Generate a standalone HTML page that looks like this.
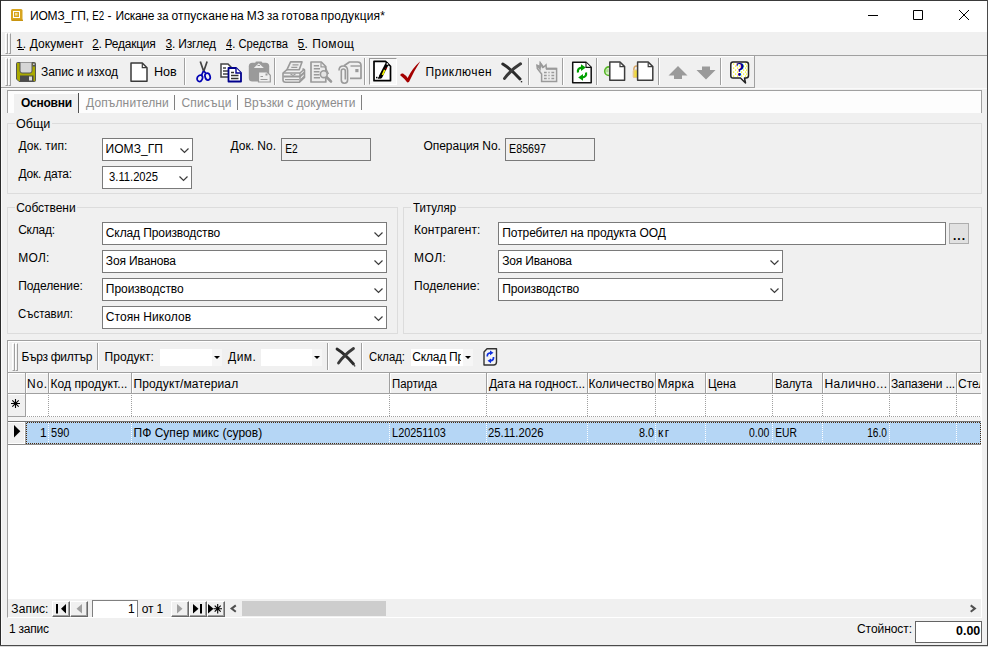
<!DOCTYPE html>
<html><head><meta charset="utf-8"><title>ИОМЗ_ГП</title>
<style>
html,body{margin:0;padding:0;}
body{width:988px;height:647px;overflow:hidden;background:#f0f0f0;position:relative;font-family:'Liberation Sans',sans-serif;font-size:12px;color:#000;}
.t{position:absolute;white-space:pre;line-height:normal;}
svg{position:absolute;overflow:visible;}
</style></head><body>
<div style="position:absolute;left:0px;top:0px;width:988px;height:647px;box-sizing:border-box;background:#f0f0f0;"></div>
<div style="position:absolute;left:1px;top:1px;width:986px;height:31px;box-sizing:border-box;background:#fff;"></div>
<svg style="left:11px;top:9px" width="12" height="12" viewBox="0 0 12 12"><rect x="0" y="0" width="11.5" height="11.5" rx="1.5" fill="#d8a520"/><rect x="0.5" y="10.5" width="11.5" height="1.5" fill="#c89410"/><rect x="2.5" y="2.5" width="6" height="6" fill="none" stroke="#fff" stroke-width="1"/><rect x="4" y="4" width="2.5" height="2.5" fill="#f3dfa0"/></svg>
<svg style="left:868px;top:10px" width="110" height="12" viewBox="0 0 110 12"><path d="M0 5.5H10 M45.5 0.5H54.5V9.5H45.5Z M91 0L101 10 M101 0L91 10" fill="none" stroke="#000" stroke-width="1"/></svg>
<div style="position:absolute;left:1px;top:32px;width:1px;height:613px;box-sizing:border-box;background:#fafafa;"></div>
<div style="position:absolute;left:5px;top:33px;width:3px;height:21px;box-sizing:border-box;border-left:1px solid #fff;border-top:1px solid #fff;border-right:1px solid #a0a0a0;border-bottom:1px solid #a0a0a0;"></div>
<div style="position:absolute;left:8px;top:33px;width:3px;height:21px;box-sizing:border-box;border-left:1px solid #fff;border-top:1px solid #fff;border-right:1px solid #a0a0a0;border-bottom:1px solid #a0a0a0;"></div>
<div style="position:absolute;left:17.5px;top:49px;width:6px;height:1px;box-sizing:border-box;background:#000;"></div>
<div style="position:absolute;left:93px;top:49px;width:6px;height:1px;box-sizing:border-box;background:#000;"></div>
<div style="position:absolute;left:166px;top:49px;width:6px;height:1px;box-sizing:border-box;background:#000;"></div>
<div style="position:absolute;left:226px;top:49px;width:6px;height:1px;box-sizing:border-box;background:#000;"></div>
<div style="position:absolute;left:298.5px;top:49px;width:6px;height:1px;box-sizing:border-box;background:#000;"></div>
<div style="position:absolute;left:1px;top:55px;width:986px;height:1px;box-sizing:border-box;background:#a0a0a0;"></div>
<div style="position:absolute;left:1px;top:56px;width:754px;height:1px;box-sizing:border-box;background:#fff;"></div>
<div style="position:absolute;left:1px;top:87px;width:754px;height:1px;box-sizing:border-box;background:#a0a0a0;"></div>
<div style="position:absolute;left:754px;top:56px;width:1px;height:32px;box-sizing:border-box;background:#a0a0a0;"></div>
<div style="position:absolute;left:5px;top:58px;width:3px;height:28px;box-sizing:border-box;border-left:1px solid #fff;border-top:1px solid #fff;border-right:1px solid #a0a0a0;border-bottom:1px solid #a0a0a0;"></div>
<div style="position:absolute;left:8px;top:58px;width:3px;height:28px;box-sizing:border-box;border-left:1px solid #fff;border-top:1px solid #fff;border-right:1px solid #a0a0a0;border-bottom:1px solid #a0a0a0;"></div>
<svg style="left:16px;top:62px" width="20" height="20" viewBox="0 0 20 20"><path d="M1.5 0.5H18.5Q19.5 0.5 19.5 1.5V18.5Q19.5 19.5 18.5 19.5H3L0.5 17V1.5Q0.5 0.5 1.5 0.5Z" fill="#a9a900" stroke="#555"/><path d="M4 0.5V9Q4 11 6 11H14Q16 11 16 9V0.5" fill="#d6d6d6" stroke="#555"/><rect x="4" y="13.5" width="13.5" height="6" fill="#4a4a4a"/><rect x="13" y="14.5" width="3" height="4" fill="#ddd"/><rect x="16.5" y="1" width="2.5" height="3.5" fill="#555"/><rect x="17.2" y="1.5" width="1.3" height="1.5" fill="#eee"/></svg>
<svg style="left:130px;top:62px" width="18" height="20" viewBox="0 0 18 20"><path d="M1 1H12.3L17 5.7V19.2H1Z" fill="#fff" stroke="#3a3a3a" stroke-width="1.5" stroke-linejoin="round"/><path d="M12.3 1.3V5.7H16.7" fill="none" stroke="#3a3a3a" stroke-width="1.2"/></svg>
<svg style="left:196px;top:61px" width="16" height="22" viewBox="0 0 16 22"><path d="M4.3 0.5L7.9 11 M11.1 0.5L7.5 11" fill="none" stroke="#444" stroke-width="1.7"/><path d="M7.4 10L5.6 14.2 M7.9 10L9.8 12.3" stroke="#0000b4" stroke-width="1.7" fill="none"/><ellipse cx="3.8" cy="17.3" rx="2.6" ry="3.3" transform="rotate(25 3.8 17.3)" fill="none" stroke="#0000b4" stroke-width="1.7"/><ellipse cx="11.6" cy="15.6" rx="2.5" ry="3.5" transform="rotate(-18 11.6 15.6)" fill="none" stroke="#0000b4" stroke-width="1.7"/></svg>
<svg style="left:220px;top:63px" width="23" height="20" viewBox="0 0 23 20"><path d="M1 1H8L11.5 4.5V14H1Z" fill="#fff" stroke="#444" stroke-width="1.5"/><path d="M3 5H6 M3 8H8 M3 11H8" stroke="#444" stroke-width="1.3"/><path d="M8.5 5H16L21 10V18.5H8.5Z" fill="#fff" stroke="#00008c" stroke-width="1.8" stroke-linejoin="round"/><path d="M16 5V10H21" fill="#fff" stroke="#00008c" stroke-width="1.4"/><path d="M11 9.5H14 M11 12.5H18.5 M11 15.5H18.5" stroke="#333" stroke-width="1.3"/></svg>
<svg style="left:248px;top:62px" width="23" height="21" viewBox="0 0 23 21"><rect x="0.8" y="0.8" width="20.4" height="18.7" rx="3.5" fill="#9a9a9a"/><rect x="7.3" y="-0.4" width="7" height="3" rx="1.4" fill="#9a9a9a"/><path d="M5.8 6L10.8 1.2L15.8 6Z" fill="#eee"/><rect x="9.5" y="3" width="2.5" height="1" fill="#9a9a9a"/><path d="M10.5 10H19L22.3 13.3V20H10.5Z" fill="#eee" stroke="#9a9a9a" stroke-width="1.2"/><path d="M12.5 14.5H15 M12.5 17.5H19.5" stroke="#9a9a9a" stroke-width="1.2"/><rect x="17.5" y="11.5" width="2" height="2" fill="#9a9a9a"/></svg>
<svg style="left:282px;top:61px" width="24" height="22" viewBox="0 0 24 22"><path d="M8.6 0.9H20L17.2 8.7H5Z" fill="#ececec" stroke="#9a9a9a" stroke-width="1.6" stroke-linejoin="round"/><path d="M10.5 3.9H16.5 M9.3 6.3H15.3" stroke="#9a9a9a" stroke-width="1.3"/><path d="M5 8.7L1 12V19Q1 21.2 3.5 21.2H17.5L22.5 16.5V9L20.5 7.7" fill="none" stroke="#9a9a9a" stroke-width="1.6" stroke-linejoin="round"/><path d="M1 12H18L22.5 8 M18 12V21" fill="none" stroke="#9a9a9a" stroke-width="1.4"/><path d="M1.5 15.4H18L22.3 11.6" fill="none" stroke="#9a9a9a" stroke-width="2"/><path d="M3 18.7H17 M18.5 19L22 15.5" stroke="#9a9a9a" stroke-width="1.3"/><path d="M8.5 13L11 14.4L13.5 13" fill="none" stroke="#9a9a9a" stroke-width="1.2"/></svg>
<svg style="left:310px;top:61px" width="24" height="22" viewBox="0 0 24 22"><path d="M1 1H11.3L15.8 5.5V21H1Z" fill="#ececec" stroke="#9a9a9a" stroke-width="1.7" stroke-linejoin="round"/><path d="M11 1.5V5.8H15.5" fill="none" stroke="#9a9a9a" stroke-width="1.2"/><path d="M3.8 4.7H9 M3.8 7.7H10 M3.8 10.7H9.5 M3.8 13.7H9.5 M3.8 16.7H10 " stroke="#9a9a9a" stroke-width="1.4"/><path d="M16 15.5L21 20.5" stroke="#9a9a9a" stroke-width="2.6" stroke-linecap="round"/><path d="M15 6L18.5 13" stroke="#9a9a9a" stroke-width="1.4"/><circle cx="13.8" cy="13.2" r="3.4" fill="#e4e4e4" stroke="#9a9a9a" stroke-width="1.6"/></svg>
<svg style="left:338px;top:61px" width="24" height="23" viewBox="0 0 24 23"><path d="M6 4.7L11.5 1H19.5Q23 1 23 4.5V17.3H12" fill="none" stroke="#9a9a9a" stroke-width="1.7" stroke-linejoin="round"/><path d="M12.5 5H22.5" stroke="#9a9a9a" stroke-width="1.4"/><rect x="17.3" y="8" width="3.2" height="3.2" fill="#9a9a9a"/><path d="M1 9.5Q1 5 5.2 5Q9.6 5 9.6 9.5V19Q9.6 22.2 6.4 22.2Q3.3 22.2 3.3 19V10Q3.3 8 5.3 8Q7.3 8 7.3 10V18.5" fill="none" stroke="#9a9a9a" stroke-width="1.6"/></svg>
<div style="position:absolute;left:369px;top:58px;width:28px;height:27px;box-sizing:border-box;border-top:1px solid #9a9a9a;border-left:1px solid #9a9a9a;border-right:1px solid #fff;border-bottom:1px solid #fff;background:#f8f8f8;"></div>
<svg style="left:373px;top:60px" width="19" height="22" viewBox="0 0 19 22"><path d="M1 1.3H12.5L17.5 6.3V20.7H1Z" fill="#fff" stroke="#000" stroke-width="1.7" stroke-linejoin="round"/><path d="M14 4L7.6 16.6" stroke="#000" stroke-width="3.6" stroke-linecap="round"/><path d="M8 16.5Q7 18.3 5 18" stroke="#000" stroke-width="1.6" fill="none"/><path d="M11.7 9.8L9.5 15" stroke="#f4f400" stroke-width="1.7"/><path d="M13.7 8.2L12.6 8.8" stroke="#c00000" stroke-width="1.8"/><rect x="13.6" y="3.2" width="1.6" height="1.6" fill="#eee"/><rect x="15" y="6.3" width="1.5" height="1.5" fill="#eee"/><rect x="3" y="16.8" width="1.5" height="1.5" fill="#000"/></svg>
<svg style="left:399px;top:61px" width="22" height="22" viewBox="0 0 22 22"><path d="M1.2 14.2Q1.5 12 4 12.6Q7 14.5 8.6 17Q13.5 7 21.3 0.3Q15 10 10 21L8.3 21.6Q5.5 17.5 1.2 14.2Z" fill="#a40000"/></svg>
<svg style="left:501px;top:62px" width="23" height="22" viewBox="0 0 23 22"><path d="M1.8 2Q10 7 19 17" fill="none" stroke="#2b2b2b" stroke-width="3" stroke-linecap="round"/><path d="M19.5 1.8Q9.5 8 3.5 16.5" fill="none" stroke="#3a3a3a" stroke-width="3" stroke-linecap="round"/><rect x="19.8" y="19" width="1.4" height="1.4" fill="#2b2b2b"/></svg>
<svg style="left:535px;top:61.3px" width="23" height="22" viewBox="0 0 23 22"><path d="M2 4.3L2.3 7.5L6.6 13V20.6H21.6V7.4H11.3L11 3.8L8.6 6.2L5.4 2L5.2 5.8Z" fill="#ececec" stroke="#9a9a9a" stroke-width="1.5" stroke-linejoin="miter"/><path d="M2 4.3L5 8L5.4 2.4L8 7" fill="none" stroke="#9a9a9a" stroke-width="1.6"/><path d="M11 7.8H21.6" stroke="#9a9a9a" stroke-width="2"/><path d="M9 11.5H11.7 M13.4 11.5H14.6 M16.4 11.5H19.2 M9 14.5H11.7 M13.4 14.5H14.6 M16.4 14.5H19.2 M9 17.5H11.7 M13.4 17.5H14.6 M16.4 17.5H19.2" stroke="#9a9a9a" stroke-width="1.3"/></svg>
<svg style="left:571px;top:61px" width="22" height="23" viewBox="0 0 22 23"><path d="M1.7 1.2H15L20.2 6.4V21.8H1.7Z" fill="#fff" stroke="#111" stroke-width="1.5" stroke-linejoin="round"/><path d="M15 1.5V6.4H20" fill="#fff" stroke="#111" stroke-width="1.1"/><path d="M7 11.5Q6.2 7.2 10.5 6.6" fill="none" stroke="#00a000" stroke-width="2.2"/><path d="M10 3.2L14.8 6.6L10 10Z" fill="#00a000"/><path d="M15 11.5Q15.8 15.8 11.5 16.4" fill="none" stroke="#00a000" stroke-width="2.2"/><path d="M12 13L7.2 16.4L12 19.8Z" fill="#00a000"/></svg>
<svg style="left:603px;top:61px" width="24" height="20" viewBox="0 0 24 20"><circle cx="6" cy="10.2" r="4.3" fill="#d8f0c8" stroke="#58b828" stroke-width="1.6"/><path d="M3.2 8.2H5.5V11.2H3.2Z" fill="#a8dc90"/><path d="M6.8 1H17L21.6 5.6V19.2H6.8Z" fill="#fff" stroke="#3c3c3c" stroke-width="1.5" stroke-linejoin="round"/><path d="M17 1.5V5.6H21.2" fill="none" stroke="#3c3c3c" stroke-width="1.2"/></svg>
<svg style="left:631px;top:61px" width="24" height="20" viewBox="0 0 24 20"><path d="M2.8 9Q2.8 5 5.5 5Q7.5 5 7.5 9" fill="none" stroke="#d8a868" stroke-width="1.6"/><rect x="1.7" y="8.5" width="6" height="8.5" rx="1.5" fill="#e8c890"/><rect x="3.3" y="9.5" width="3.5" height="6.5" fill="#f0dc40"/><path d="M6.6 1H17.2L21.8 5.6V19.2H6.6Z" fill="#fff" stroke="#3c3c3c" stroke-width="1.5" stroke-linejoin="round"/><path d="M17.2 1.5V5.6H21.4" fill="none" stroke="#3c3c3c" stroke-width="1.2"/></svg>
<svg style="left:668px;top:66px" width="20" height="14" viewBox="0 0 20 14"><path d="M10 0L19.5 9.5H14V13H6V9.5H0.5Z" fill="#9a9a9a"/></svg>
<svg style="left:696px;top:66px" width="20" height="14" viewBox="0 0 20 14"><path d="M10 13.5L19.5 4H14V0.5H6V4H0.5Z" fill="#9a9a9a"/></svg>
<svg style="left:730px;top:61px" width="20" height="23" viewBox="0 0 20 23"><path d="M3 1H16Q18.5 1 18.5 3.5V14.5Q18.5 17 16 17H14.5L15.5 22L10.5 17H3Q0.8 17 0.8 14.5V3.5Q0.8 1 3 1Z" fill="#fff" stroke="#222" stroke-width="1.5" stroke-linejoin="round"/><rect x="3" y="2.5" width="1.2" height="1.2" fill="#f4f000"/><rect x="7" y="2.5" width="1.2" height="1.2" fill="#f4f000"/><rect x="11" y="2.5" width="1.2" height="1.2" fill="#f4f000"/><rect x="15" y="2.5" width="1.2" height="1.2" fill="#f4f000"/><rect x="5" y="4.5" width="1.2" height="1.2" fill="#f4f000"/><rect x="9" y="4.5" width="1.2" height="1.2" fill="#f4f000"/><rect x="13" y="4.5" width="1.2" height="1.2" fill="#f4f000"/><rect x="16" y="4.5" width="1.2" height="1.2" fill="#f4f000"/><rect x="3" y="6.5" width="1.2" height="1.2" fill="#f4f000"/><rect x="7" y="6.5" width="1.2" height="1.2" fill="#f4f000"/><rect x="11" y="6.5" width="1.2" height="1.2" fill="#f4f000"/><rect x="15" y="6.5" width="1.2" height="1.2" fill="#f4f000"/><rect x="5" y="8.5" width="1.2" height="1.2" fill="#f4f000"/><rect x="9" y="8.5" width="1.2" height="1.2" fill="#f4f000"/><rect x="13" y="8.5" width="1.2" height="1.2" fill="#f4f000"/><rect x="16" y="8.5" width="1.2" height="1.2" fill="#f4f000"/><rect x="3" y="10.5" width="1.2" height="1.2" fill="#f4f000"/><rect x="7" y="10.5" width="1.2" height="1.2" fill="#f4f000"/><rect x="11" y="10.5" width="1.2" height="1.2" fill="#f4f000"/><rect x="15" y="10.5" width="1.2" height="1.2" fill="#f4f000"/><rect x="5" y="12.5" width="1.2" height="1.2" fill="#f4f000"/><rect x="9" y="12.5" width="1.2" height="1.2" fill="#f4f000"/><rect x="13" y="12.5" width="1.2" height="1.2" fill="#f4f000"/><rect x="16" y="12.5" width="1.2" height="1.2" fill="#f4f000"/><rect x="3" y="14.5" width="1.2" height="1.2" fill="#f4f000"/><rect x="7" y="14.5" width="1.2" height="1.2" fill="#f4f000"/><rect x="11" y="14.5" width="1.2" height="1.2" fill="#f4f000"/><rect x="15" y="14.5" width="1.2" height="1.2" fill="#f4f000"/><text x="10" y="15.3" text-anchor="middle" font-family="Liberation Serif,serif" font-weight="bold" font-size="18" fill="#000098">?</text></svg>
<div style="position:absolute;left:184px;top:58px;width:1px;height:27px;box-sizing:border-box;background:#a0a0a0;"></div>
<div style="position:absolute;left:185px;top:58px;width:1px;height:27px;box-sizing:border-box;background:#fff;"></div>
<div style="position:absolute;left:274px;top:58px;width:1px;height:27px;box-sizing:border-box;background:#a0a0a0;"></div>
<div style="position:absolute;left:275px;top:58px;width:1px;height:27px;box-sizing:border-box;background:#fff;"></div>
<div style="position:absolute;left:364px;top:58px;width:1px;height:27px;box-sizing:border-box;background:#a0a0a0;"></div>
<div style="position:absolute;left:365px;top:58px;width:1px;height:27px;box-sizing:border-box;background:#fff;"></div>
<div style="position:absolute;left:528px;top:58px;width:1px;height:27px;box-sizing:border-box;background:#a0a0a0;"></div>
<div style="position:absolute;left:529px;top:58px;width:1px;height:27px;box-sizing:border-box;background:#fff;"></div>
<div style="position:absolute;left:562px;top:58px;width:1px;height:27px;box-sizing:border-box;background:#a0a0a0;"></div>
<div style="position:absolute;left:563px;top:58px;width:1px;height:27px;box-sizing:border-box;background:#fff;"></div>
<div style="position:absolute;left:596px;top:58px;width:1px;height:27px;box-sizing:border-box;background:#a0a0a0;"></div>
<div style="position:absolute;left:597px;top:58px;width:1px;height:27px;box-sizing:border-box;background:#fff;"></div>
<div style="position:absolute;left:658px;top:58px;width:1px;height:27px;box-sizing:border-box;background:#a0a0a0;"></div>
<div style="position:absolute;left:659px;top:58px;width:1px;height:27px;box-sizing:border-box;background:#fff;"></div>
<div style="position:absolute;left:720px;top:58px;width:1px;height:27px;box-sizing:border-box;background:#a0a0a0;"></div>
<div style="position:absolute;left:721px;top:58px;width:1px;height:27px;box-sizing:border-box;background:#fff;"></div>
<div style="position:absolute;left:1px;top:88px;width:986px;height:1px;box-sizing:border-box;background:#fafafa;"></div>
<div style="position:absolute;left:7px;top:90px;width:975px;height:23px;box-sizing:border-box;background:#fdfdfd;border-left:1px solid #a0a0a0;border-top:1px solid #a0a0a0;border-right:1px solid #a0a0a0;"></div>
<div style="position:absolute;left:14px;top:94px;width:64px;height:19px;box-sizing:border-box;background:#f0f0f0;"></div>
<div style="position:absolute;left:78px;top:93px;width:1px;height:20px;box-sizing:border-box;background:#505050;"></div>
<div style="position:absolute;left:174px;top:95px;width:1px;height:15px;box-sizing:border-box;background:#808080;"></div>
<div style="position:absolute;left:237px;top:95px;width:1px;height:15px;box-sizing:border-box;background:#808080;"></div>
<div style="position:absolute;left:361px;top:95px;width:1px;height:15px;box-sizing:border-box;background:#808080;"></div>
<div style="position:absolute;left:7px;top:123px;width:975px;height:71px;box-sizing:border-box;border:1px solid #dcdcdc;"></div>
<div style="position:absolute;left:15px;top:121px;width:36.5px;height:5px;box-sizing:border-box;background:#f0f0f0;"></div>
<div style="position:absolute;left:7px;top:207px;width:391px;height:127px;box-sizing:border-box;border:1px solid #dcdcdc;"></div>
<div style="position:absolute;left:15.2px;top:205px;width:61.599999999999994px;height:5px;box-sizing:border-box;background:#f0f0f0;"></div>
<div style="position:absolute;left:403px;top:207px;width:579px;height:127px;box-sizing:border-box;border:1px solid #dcdcdc;"></div>
<div style="position:absolute;left:410.5px;top:205px;width:47.0px;height:5px;box-sizing:border-box;background:#f0f0f0;"></div>
<div style="position:absolute;left:102px;top:138px;width:91px;height:23px;box-sizing:border-box;background:#fff;border:1px solid #7a7a7a;"></div>
<svg style="left:179.7px;top:147.5px" width="9" height="5" viewBox="0 0 9 5"><path d="M0.5 0.5L4.5 4.5L8.5 0.5" fill="none" stroke="#3c3c3c" stroke-width="1.2"/></svg>
<div style="position:absolute;left:281px;top:138px;width:90px;height:23px;box-sizing:border-box;background:#f0f0f0;border:1px solid #7a7a7a;"></div>
<div style="position:absolute;left:505px;top:138px;width:90px;height:23px;box-sizing:border-box;background:#f0f0f0;border:1px solid #7a7a7a;"></div>
<div style="position:absolute;left:102px;top:166px;width:90px;height:23px;box-sizing:border-box;background:#fff;border:1px solid #7a7a7a;"></div>
<svg style="left:178.7px;top:175.5px" width="9" height="5" viewBox="0 0 9 5"><path d="M0.5 0.5L4.5 4.5L8.5 0.5" fill="none" stroke="#3c3c3c" stroke-width="1.2"/></svg>
<div style="position:absolute;left:102px;top:222px;width:285px;height:23px;box-sizing:border-box;background:#fff;border:1px solid #7a7a7a;"></div>
<svg style="left:373.7px;top:231.5px" width="9" height="5" viewBox="0 0 9 5"><path d="M0.5 0.5L4.5 4.5L8.5 0.5" fill="none" stroke="#3c3c3c" stroke-width="1.2"/></svg>
<div style="position:absolute;left:102px;top:250px;width:285px;height:23px;box-sizing:border-box;background:#fff;border:1px solid #7a7a7a;"></div>
<svg style="left:373.7px;top:259.5px" width="9" height="5" viewBox="0 0 9 5"><path d="M0.5 0.5L4.5 4.5L8.5 0.5" fill="none" stroke="#3c3c3c" stroke-width="1.2"/></svg>
<div style="position:absolute;left:102px;top:278px;width:285px;height:23px;box-sizing:border-box;background:#fff;border:1px solid #7a7a7a;"></div>
<svg style="left:373.7px;top:287.5px" width="9" height="5" viewBox="0 0 9 5"><path d="M0.5 0.5L4.5 4.5L8.5 0.5" fill="none" stroke="#3c3c3c" stroke-width="1.2"/></svg>
<div style="position:absolute;left:102px;top:306px;width:285px;height:23px;box-sizing:border-box;background:#fff;border:1px solid #7a7a7a;"></div>
<svg style="left:373.7px;top:315.5px" width="9" height="5" viewBox="0 0 9 5"><path d="M0.5 0.5L4.5 4.5L8.5 0.5" fill="none" stroke="#3c3c3c" stroke-width="1.2"/></svg>
<div style="position:absolute;left:498px;top:222px;width:448px;height:23px;box-sizing:border-box;background:#fff;border:1px solid #7a7a7a;"></div>
<div style="position:absolute;left:949px;top:223px;width:20px;height:21px;box-sizing:border-box;background:#e1e1e1;border:1px solid #adadad;"></div>
<div style="position:absolute;left:498px;top:250px;width:285px;height:23px;box-sizing:border-box;background:#fff;border:1px solid #7a7a7a;"></div>
<svg style="left:769.7px;top:259.5px" width="9" height="5" viewBox="0 0 9 5"><path d="M0.5 0.5L4.5 4.5L8.5 0.5" fill="none" stroke="#3c3c3c" stroke-width="1.2"/></svg>
<div style="position:absolute;left:498px;top:278px;width:285px;height:23px;box-sizing:border-box;background:#fff;border:1px solid #7a7a7a;"></div>
<svg style="left:769.7px;top:287.5px" width="9" height="5" viewBox="0 0 9 5"><path d="M0.5 0.5L4.5 4.5L8.5 0.5" fill="none" stroke="#3c3c3c" stroke-width="1.2"/></svg>
<div style="position:absolute;left:7px;top:340px;width:974px;height:33px;box-sizing:border-box;background:#f0f0f0;border:1px solid #a0a0a0;"></div>
<div style="position:absolute;left:8px;top:341px;width:972px;height:1px;box-sizing:border-box;background:#fff;"></div>
<div style="position:absolute;left:8px;top:341px;width:1px;height:31px;box-sizing:border-box;background:#fff;"></div>
<div style="position:absolute;left:12px;top:343px;width:3px;height:28px;box-sizing:border-box;border-left:1px solid #fff;border-top:1px solid #fff;border-right:1px solid #a0a0a0;border-bottom:1px solid #a0a0a0;"></div>
<div style="position:absolute;left:15px;top:343px;width:3px;height:28px;box-sizing:border-box;border-left:1px solid #fff;border-top:1px solid #fff;border-right:1px solid #a0a0a0;border-bottom:1px solid #a0a0a0;"></div>
<div style="position:absolute;left:160px;top:349px;width:62px;height:17px;box-sizing:border-box;background:#fff;"></div>
<div style="position:absolute;left:212px;top:349px;width:10px;height:17px;box-sizing:border-box;background:#f6f6f6;"></div>
<svg style="left:214px;top:356px" width="6" height="3" viewBox="0 0 6 3"><path d="M0 0H6L3 3Z" fill="#000"/></svg>
<div style="position:absolute;left:261px;top:349px;width:61px;height:17px;box-sizing:border-box;background:#fff;"></div>
<div style="position:absolute;left:312px;top:349px;width:10px;height:17px;box-sizing:border-box;background:#f6f6f6;"></div>
<svg style="left:314px;top:356px" width="6" height="3" viewBox="0 0 6 3"><path d="M0 0H6L3 3Z" fill="#000"/></svg>
<div style="position:absolute;left:411px;top:349px;width:62px;height:17px;box-sizing:border-box;background:#fff;"></div>
<div style="position:absolute;left:463px;top:349px;width:10px;height:17px;box-sizing:border-box;background:#f6f6f6;"></div>
<svg style="left:465px;top:356px" width="6" height="3" viewBox="0 0 6 3"><path d="M0 0H6L3 3Z" fill="#000"/></svg>
<div style="position:absolute;left:97px;top:343px;width:1px;height:27px;box-sizing:border-box;background:#a0a0a0;"></div>
<div style="position:absolute;left:98px;top:343px;width:1px;height:27px;box-sizing:border-box;background:#fff;"></div>
<div style="position:absolute;left:327px;top:343px;width:1px;height:27px;box-sizing:border-box;background:#a0a0a0;"></div>
<div style="position:absolute;left:328px;top:343px;width:1px;height:27px;box-sizing:border-box;background:#fff;"></div>
<div style="position:absolute;left:361px;top:343px;width:1px;height:27px;box-sizing:border-box;background:#a0a0a0;"></div>
<div style="position:absolute;left:362px;top:343px;width:1px;height:27px;box-sizing:border-box;background:#fff;"></div>
<svg style="left:335px;top:347px" width="22" height="21" viewBox="0 0 22 21"><path d="M2 2Q10 7 18.5 17" fill="none" stroke="#2b2b2b" stroke-width="2.8" stroke-linecap="round"/><path d="M18.5 1.5Q9 8 3.5 16" fill="none" stroke="#3a3a3a" stroke-width="2.8" stroke-linecap="round"/><rect x="19" y="18.2" width="1.3" height="1.3" fill="#2b2b2b"/></svg>
<svg style="left:483px;top:348px" width="15" height="18" viewBox="0 0 15 18"><path d="M4 0.8H13.5V14Q13.5 17 10.5 17H1V4Z" fill="#f4f4f4" stroke="#333" stroke-width="1.4" stroke-linejoin="round"/><path d="M4.3 8.5Q4 5 7.5 4.8" fill="none" stroke="#1030e0" stroke-width="1.7"/><path d="M7 2.5L10.5 4.8L7 7.2Z" fill="#1030e0"/><path d="M10.5 9Q10.8 12.5 7.5 12.8" fill="none" stroke="#1030e0" stroke-width="1.7"/><path d="M8 10.4L4.5 12.8L8 15.2Z" fill="#1030e0"/></svg>
<div style="position:absolute;left:7px;top:372px;width:975px;height:246px;box-sizing:border-box;background:#f0f0f0;border-left:1px solid #a0a0a0;border-top:1px solid #a0a0a0;border-right:1px solid #fff;border-bottom:1px solid #fff;"></div>
<div style="position:absolute;left:8px;top:373px;width:973px;height:226px;box-sizing:border-box;background:#fff;"></div>
<div style="position:absolute;left:8px;top:373px;width:973px;height:21px;box-sizing:border-box;background:#f0f0f0;"></div>
<div style="position:absolute;left:8px;top:373px;width:973px;height:1px;box-sizing:border-box;background:#fff;"></div>
<div style="position:absolute;left:8px;top:393px;width:973px;height:1px;box-sizing:border-box;background:#a0a0a0;"></div>
<div style="position:absolute;left:8px;top:374px;width:1px;height:19px;box-sizing:border-box;background:#fff;"></div>
<div style="position:absolute;left:25px;top:373px;width:1px;height:21px;box-sizing:border-box;background:#a0a0a0;"></div>
<div style="position:absolute;left:26px;top:374px;width:1px;height:19px;box-sizing:border-box;background:#fff;"></div>
<div style="position:absolute;left:48px;top:373px;width:1px;height:21px;box-sizing:border-box;background:#a0a0a0;"></div>
<div style="position:absolute;left:49px;top:374px;width:1px;height:19px;box-sizing:border-box;background:#fff;"></div>
<div style="position:absolute;left:131px;top:373px;width:1px;height:21px;box-sizing:border-box;background:#a0a0a0;"></div>
<div style="position:absolute;left:132px;top:374px;width:1px;height:19px;box-sizing:border-box;background:#fff;"></div>
<div style="position:absolute;left:389px;top:373px;width:1px;height:21px;box-sizing:border-box;background:#a0a0a0;"></div>
<div style="position:absolute;left:390px;top:374px;width:1px;height:19px;box-sizing:border-box;background:#fff;"></div>
<div style="position:absolute;left:486px;top:373px;width:1px;height:21px;box-sizing:border-box;background:#a0a0a0;"></div>
<div style="position:absolute;left:487px;top:374px;width:1px;height:19px;box-sizing:border-box;background:#fff;"></div>
<div style="position:absolute;left:587px;top:373px;width:1px;height:21px;box-sizing:border-box;background:#a0a0a0;"></div>
<div style="position:absolute;left:588px;top:374px;width:1px;height:19px;box-sizing:border-box;background:#fff;"></div>
<div style="position:absolute;left:655px;top:373px;width:1px;height:21px;box-sizing:border-box;background:#a0a0a0;"></div>
<div style="position:absolute;left:656px;top:374px;width:1px;height:19px;box-sizing:border-box;background:#fff;"></div>
<div style="position:absolute;left:705px;top:373px;width:1px;height:21px;box-sizing:border-box;background:#a0a0a0;"></div>
<div style="position:absolute;left:706px;top:374px;width:1px;height:19px;box-sizing:border-box;background:#fff;"></div>
<div style="position:absolute;left:772px;top:373px;width:1px;height:21px;box-sizing:border-box;background:#a0a0a0;"></div>
<div style="position:absolute;left:773px;top:374px;width:1px;height:19px;box-sizing:border-box;background:#fff;"></div>
<div style="position:absolute;left:822px;top:373px;width:1px;height:21px;box-sizing:border-box;background:#a0a0a0;"></div>
<div style="position:absolute;left:823px;top:374px;width:1px;height:19px;box-sizing:border-box;background:#fff;"></div>
<div style="position:absolute;left:889px;top:373px;width:1px;height:21px;box-sizing:border-box;background:#a0a0a0;"></div>
<div style="position:absolute;left:890px;top:374px;width:1px;height:19px;box-sizing:border-box;background:#fff;"></div>
<div style="position:absolute;left:956px;top:373px;width:1px;height:21px;box-sizing:border-box;background:#a0a0a0;"></div>
<div style="position:absolute;left:957px;top:374px;width:1px;height:19px;box-sizing:border-box;background:#fff;"></div>
<div style="position:absolute;left:8px;top:395px;width:17px;height:21px;box-sizing:border-box;background:#f0f0f0;"></div>
<div style="position:absolute;left:25px;top:394px;width:1px;height:23px;box-sizing:border-box;background:#a0a0a0;"></div>
<div style="position:absolute;left:8px;top:416px;width:18px;height:1px;box-sizing:border-box;background:#a0a0a0;"></div>
<div style="position:absolute;left:48px;top:394px;width:1px;height:22px;box-sizing:border-box;background:repeating-linear-gradient(to bottom,transparent 0 1px,#a0a0a0 1px 2px);"></div>
<div style="position:absolute;left:131px;top:394px;width:1px;height:22px;box-sizing:border-box;background:repeating-linear-gradient(to bottom,transparent 0 1px,#a0a0a0 1px 2px);"></div>
<div style="position:absolute;left:389px;top:394px;width:1px;height:22px;box-sizing:border-box;background:repeating-linear-gradient(to bottom,transparent 0 1px,#a0a0a0 1px 2px);"></div>
<div style="position:absolute;left:486px;top:394px;width:1px;height:22px;box-sizing:border-box;background:repeating-linear-gradient(to bottom,transparent 0 1px,#a0a0a0 1px 2px);"></div>
<div style="position:absolute;left:587px;top:394px;width:1px;height:22px;box-sizing:border-box;background:repeating-linear-gradient(to bottom,transparent 0 1px,#a0a0a0 1px 2px);"></div>
<div style="position:absolute;left:655px;top:394px;width:1px;height:22px;box-sizing:border-box;background:repeating-linear-gradient(to bottom,transparent 0 1px,#a0a0a0 1px 2px);"></div>
<div style="position:absolute;left:705px;top:394px;width:1px;height:22px;box-sizing:border-box;background:repeating-linear-gradient(to bottom,transparent 0 1px,#a0a0a0 1px 2px);"></div>
<div style="position:absolute;left:772px;top:394px;width:1px;height:22px;box-sizing:border-box;background:repeating-linear-gradient(to bottom,transparent 0 1px,#a0a0a0 1px 2px);"></div>
<div style="position:absolute;left:822px;top:394px;width:1px;height:22px;box-sizing:border-box;background:repeating-linear-gradient(to bottom,transparent 0 1px,#a0a0a0 1px 2px);"></div>
<div style="position:absolute;left:889px;top:394px;width:1px;height:22px;box-sizing:border-box;background:repeating-linear-gradient(to bottom,transparent 0 1px,#a0a0a0 1px 2px);"></div>
<div style="position:absolute;left:956px;top:394px;width:1px;height:22px;box-sizing:border-box;background:repeating-linear-gradient(to bottom,transparent 0 1px,#a0a0a0 1px 2px);"></div>
<div style="position:absolute;left:26px;top:416px;width:955px;height:1px;box-sizing:border-box;background:repeating-linear-gradient(to right,transparent 0 1px,#a0a0a0 1px 2px);"></div>
<svg style="left:11px;top:399px" width="9" height="9" viewBox="0 0 9 9"><path d="M4.5 0V9 M0 4.5H9 M1.3 1.3L7.7 7.7 M7.7 1.3L1.3 7.7" stroke="#000" stroke-width="1.1" fill="none"/></svg>
<div style="position:absolute;left:8px;top:417px;width:973px;height:4px;box-sizing:border-box;background:#f4f4f4;"></div>
<div style="position:absolute;left:8px;top:421px;width:18px;height:24px;box-sizing:border-box;background:#f0f0f0;"></div>
<div style="position:absolute;left:8px;top:422px;width:17px;height:1px;box-sizing:border-box;background:#fff;"></div>
<div style="position:absolute;left:24px;top:422px;width:1px;height:22px;box-sizing:border-box;background:#fff;"></div>
<div style="position:absolute;left:8px;top:443px;width:17px;height:1px;box-sizing:border-box;background:#fff;"></div>
<div style="position:absolute;left:25px;top:421px;width:1px;height:24px;box-sizing:border-box;background:#a0a0a0;"></div>
<div style="position:absolute;left:26px;top:422px;width:955px;height:22px;box-sizing:border-box;background:#b5d6f5;"></div>
<div style="position:absolute;left:8px;top:421px;width:973px;height:1px;box-sizing:border-box;background:#747474;"></div>
<div style="position:absolute;left:8px;top:444px;width:973px;height:1px;box-sizing:border-box;background:#8c8c8c;"></div>
<div style="position:absolute;left:48px;top:423px;width:1px;height:20px;box-sizing:border-box;background:repeating-linear-gradient(to bottom,#fff 0 1px,transparent 1px 2px);"></div>
<div style="position:absolute;left:131px;top:423px;width:1px;height:20px;box-sizing:border-box;background:repeating-linear-gradient(to bottom,#fff 0 1px,transparent 1px 2px);"></div>
<div style="position:absolute;left:389px;top:423px;width:1px;height:20px;box-sizing:border-box;background:repeating-linear-gradient(to bottom,#fff 0 1px,transparent 1px 2px);"></div>
<div style="position:absolute;left:486px;top:423px;width:1px;height:20px;box-sizing:border-box;background:repeating-linear-gradient(to bottom,#fff 0 1px,transparent 1px 2px);"></div>
<div style="position:absolute;left:587px;top:423px;width:1px;height:20px;box-sizing:border-box;background:repeating-linear-gradient(to bottom,#fff 0 1px,transparent 1px 2px);"></div>
<div style="position:absolute;left:655px;top:423px;width:1px;height:20px;box-sizing:border-box;background:repeating-linear-gradient(to bottom,#fff 0 1px,transparent 1px 2px);"></div>
<div style="position:absolute;left:705px;top:423px;width:1px;height:20px;box-sizing:border-box;background:repeating-linear-gradient(to bottom,#fff 0 1px,transparent 1px 2px);"></div>
<div style="position:absolute;left:772px;top:423px;width:1px;height:20px;box-sizing:border-box;background:repeating-linear-gradient(to bottom,#fff 0 1px,transparent 1px 2px);"></div>
<div style="position:absolute;left:822px;top:423px;width:1px;height:20px;box-sizing:border-box;background:repeating-linear-gradient(to bottom,#fff 0 1px,transparent 1px 2px);"></div>
<div style="position:absolute;left:889px;top:423px;width:1px;height:20px;box-sizing:border-box;background:repeating-linear-gradient(to bottom,#fff 0 1px,transparent 1px 2px);"></div>
<div style="position:absolute;left:956px;top:423px;width:1px;height:20px;box-sizing:border-box;background:repeating-linear-gradient(to bottom,#fff 0 1px,transparent 1px 2px);"></div>
<div style="position:absolute;left:26px;top:422px;width:955px;height:1px;box-sizing:border-box;background:repeating-linear-gradient(to right,transparent 0 1px,#4a290a 1px 2px);"></div>
<div style="position:absolute;left:26px;top:443px;width:955px;height:1px;box-sizing:border-box;background:repeating-linear-gradient(to right,#4a290a 0 1px,transparent 1px 2px);"></div>
<div style="position:absolute;left:26px;top:423px;width:1px;height:20px;box-sizing:border-box;background:repeating-linear-gradient(to bottom,#4a290a 0 1px,transparent 1px 2px);"></div>
<div style="position:absolute;left:980px;top:423px;width:1px;height:20px;box-sizing:border-box;background:repeating-linear-gradient(to bottom,#4a290a 0 1px,transparent 1px 2px);"></div>
<svg style="left:14px;top:425px" width="7" height="13" viewBox="0 0 7 13"><path d="M0 0L6.3 6.3L0 12.6Z" fill="#000"/></svg>
<div style="position:absolute;left:8px;top:599px;width:973px;height:18px;box-sizing:border-box;background:#f0f0f0;"></div>
<div style="position:absolute;left:92px;top:600px;width:46px;height:17px;box-sizing:border-box;background:#fff;border-top:1px solid #808080;border-left:1px solid #808080;border-right:1px solid #808080;"></div>
<div style="position:absolute;left:52px;top:601px;width:18px;height:16px;box-sizing:border-box;background:#f0f0f0;border-top:1px solid #fff;border-left:1px solid #fff;border-right:1px solid #696969;border-bottom:1px solid #696969;"></div>
<div style="position:absolute;left:53px;top:602px;width:16px;height:14px;box-sizing:border-box;border-right:1px solid #a0a0a0;border-bottom:1px solid #a0a0a0;"></div>
<div style="position:absolute;left:70px;top:601px;width:18px;height:16px;box-sizing:border-box;background:#f0f0f0;border-top:1px solid #fff;border-left:1px solid #fff;border-right:1px solid #696969;border-bottom:1px solid #696969;"></div>
<div style="position:absolute;left:71px;top:602px;width:16px;height:14px;box-sizing:border-box;border-right:1px solid #a0a0a0;border-bottom:1px solid #a0a0a0;"></div>
<div style="position:absolute;left:171px;top:601px;width:18px;height:16px;box-sizing:border-box;background:#f0f0f0;border-top:1px solid #fff;border-left:1px solid #fff;border-right:1px solid #696969;border-bottom:1px solid #696969;"></div>
<div style="position:absolute;left:172px;top:602px;width:16px;height:14px;box-sizing:border-box;border-right:1px solid #a0a0a0;border-bottom:1px solid #a0a0a0;"></div>
<div style="position:absolute;left:189px;top:601px;width:18px;height:16px;box-sizing:border-box;background:#f0f0f0;border-top:1px solid #fff;border-left:1px solid #fff;border-right:1px solid #696969;border-bottom:1px solid #696969;"></div>
<div style="position:absolute;left:190px;top:602px;width:16px;height:14px;box-sizing:border-box;border-right:1px solid #a0a0a0;border-bottom:1px solid #a0a0a0;"></div>
<div style="position:absolute;left:207px;top:601px;width:18px;height:16px;box-sizing:border-box;background:#f0f0f0;border-top:1px solid #fff;border-left:1px solid #fff;border-right:1px solid #696969;border-bottom:1px solid #696969;"></div>
<div style="position:absolute;left:208px;top:602px;width:16px;height:14px;box-sizing:border-box;border-right:1px solid #a0a0a0;border-bottom:1px solid #a0a0a0;"></div>
<svg style="left:56px;top:604px" width="10" height="10" viewBox="0 0 10 10"><path d="M0 0H2V9.5H0Z M10 0V9.5L5 4.75Z" fill="#000"/></svg>
<svg style="left:76px;top:604px" width="6" height="10" viewBox="0 0 6 10"><path d="M6 0V9.5L0.5 4.75Z" fill="#a0a0a0"/></svg>
<svg style="left:177px;top:604px" width="6" height="10" viewBox="0 0 6 10"><path d="M0 0V9.5L5.5 4.75Z" fill="#a0a0a0"/></svg>
<svg style="left:193px;top:604px" width="10" height="10" viewBox="0 0 10 10"><path d="M7 0H9V9.5H7Z M0 0V9.5L5.5 4.75Z" fill="#000"/></svg>
<svg style="left:208px;top:604px" width="15" height="10" viewBox="0 0 15 10"><path d="M0 0V9.5L5.5 4.75Z" fill="#000"/><path d="M9.7 0V9.5 M5.5 4.75H14 M6.7 1.7L12.7 7.7 M12.7 1.7L6.7 7.7" stroke="#000" stroke-width="1.1" fill="none"/></svg>
<div style="position:absolute;left:242px;top:601px;width:144px;height:15px;box-sizing:border-box;background:#cdcdcd;"></div>
<svg style="left:229.5px;top:605px" width="7" height="8" viewBox="0 0 7 8"><path d="M5.8 0.4L1.6 3.6L5.8 6.8" fill="none" stroke="#505050" stroke-width="2"/></svg>
<svg style="left:969.5px;top:605px" width="7" height="8" viewBox="0 0 7 8"><path d="M0.7 0.4L4.9 3.6L0.7 6.8" fill="none" stroke="#505050" stroke-width="2"/></svg>
<div style="position:absolute;left:915px;top:621px;width:67px;height:22px;box-sizing:border-box;background:#fff;border:1px solid #646464;"></div>
<div style="position:absolute;left:0px;top:0px;width:988px;height:1px;box-sizing:border-box;background:#3a3a3a;"></div>
<div style="position:absolute;left:0px;top:0px;width:1px;height:647px;box-sizing:border-box;background:#2a2a2a;"></div>
<div style="position:absolute;left:987px;top:0px;width:1px;height:647px;box-sizing:border-box;background:#4a4a4a;"></div>
<div style="position:absolute;left:0px;top:645px;width:988px;height:1px;box-sizing:border-box;background:#4a4a4a;"></div>
<div style="position:absolute;left:0px;top:646px;width:988px;height:1px;box-sizing:border-box;background:#d8d8d8;"></div>
<span class="t" style="left:30.00px;top:9px;font-size:12px;;letter-spacing:-0.171px;">ИОМЗ_ГП, </span>
<span class="t" style="left:92.10px;top:9px;font-size:12px;;transform:scaleX(0.8077);transform-origin:1px 0;">Е2 </span>
<span class="t" style="left:107.60px;top:9px;font-size:12px;;letter-spacing:0.000px;">- </span>
<span class="t" style="left:115.50px;top:9px;font-size:12px;;letter-spacing:-0.240px;">Искане </span>
<span class="t" style="left:156.90px;top:9px;font-size:12px;;transform:scaleX(0.9364);transform-origin:1px 0;">за </span>
<span class="t" style="left:171.50px;top:9px;font-size:12px;;letter-spacing:0.150px;">отпускане </span>
<span class="t" style="left:230.60px;top:9px;font-size:12px;;letter-spacing:-0.100px;">на </span>
<span class="t" style="left:246.80px;top:9px;font-size:12px;;letter-spacing:0.200px;">МЗ </span>
<span class="t" style="left:267.20px;top:9px;font-size:12px;;transform:scaleX(0.9545);transform-origin:1px 0;">за </span>
<span class="t" style="left:281.60px;top:9px;font-size:12px;;letter-spacing:0.260px;">готова </span>
<span class="t" style="left:320.80px;top:9px;font-size:12px;;letter-spacing:0.167px;">продукция* </span>
<span class="t" style="left:16.00px;top:37px;font-size:12px;;letter-spacing:0.100px;">1. Документ</span>
<span class="t" style="left:92.00px;top:37px;font-size:12px;;letter-spacing:-0.250px;">2. Редакция</span>
<span class="t" style="left:165.50px;top:37px;font-size:12px;;letter-spacing:-0.188px;">3. Изглед</span>
<span class="t" style="left:226.00px;top:37px;font-size:12px;;transform:scaleX(0.9318);transform-origin:0px 0;">4. Средства</span>
<span class="t" style="left:297.50px;top:37px;font-size:12px;;letter-spacing:0.429px;">5. Помощ</span>
<span class="t" style="left:41.00px;top:65px;font-size:12px;;letter-spacing:-0.083px;">Запис и изход</span>
<span class="t" style="left:153.50px;top:65px;font-size:12px;;transform:scaleX(1.0500);transform-origin:1px 0;">Нов</span>
<span class="t" style="left:425.50px;top:65px;font-size:12px;;letter-spacing:0.438px;">Приключен</span>
<span class="t" style="left:21.00px;top:96px;font-size:12px;font-weight:bold;letter-spacing:-0.250px;">Основни</span>
<span class="t" style="left:86.00px;top:96px;font-size:12px;color:#8c8c8c;letter-spacing:0.136px;">Допълнителни</span>
<span class="t" style="left:181.50px;top:96px;font-size:12px;color:#8c8c8c;letter-spacing:0.167px;">Списъци</span>
<span class="t" style="left:244.00px;top:96px;font-size:12px;color:#8c8c8c;letter-spacing:0.029px;">Връзки с документи</span>
<span class="t" style="left:16.00px;top:117px;font-size:12px;;transform:scaleX(1.0484);transform-origin:1px 0;">Общи</span>
<span class="t" style="left:16.20px;top:201px;font-size:12px;;letter-spacing:-0.050px;">Собствени</span>
<span class="t" style="left:412.50px;top:201px;font-size:12px;;transform:scaleX(0.9556);transform-origin:0px 0;">Титуляр</span>
<span class="t" style="left:18.50px;top:139px;font-size:12px;;letter-spacing:0.000px;">Док. тип:</span>
<span class="t" style="left:105.60px;top:142px;font-size:12px;;letter-spacing:0.033px;">ИОМЗ_ГП</span>
<span class="t" style="left:230.50px;top:139px;font-size:12px;;letter-spacing:0.000px;">Док. No.</span>
<span class="t" style="left:284.50px;top:142px;font-size:12px;;transform:scaleX(0.8462);transform-origin:1px 0;">Е2</span>
<span class="t" style="left:423.50px;top:139px;font-size:12px;;letter-spacing:-0.045px;">Операция No.</span>
<span class="t" style="left:508.50px;top:142px;font-size:12px;;transform:scaleX(0.8875);transform-origin:1px 0;">Е85697</span>
<span class="t" style="left:18.50px;top:167px;font-size:12px;;letter-spacing:-0.222px;">Док. дата:</span>
<span class="t" style="left:109.40px;top:170px;font-size:12px;;transform:scaleX(0.9333);transform-origin:1px 0;">3.11.2025</span>
<span class="t" style="left:18.20px;top:223px;font-size:12px;;letter-spacing:-0.240px;">Склад:</span>
<span class="t" style="left:105.80px;top:226px;font-size:12px;;letter-spacing:-0.106px;">Склад Производство</span>
<span class="t" style="left:18.20px;top:251px;font-size:12px;;letter-spacing:0.267px;">МОЛ:</span>
<span class="t" style="left:105.80px;top:254px;font-size:12px;;letter-spacing:-0.130px;">Зоя Иванова</span>
<span class="t" style="left:18.20px;top:279px;font-size:12px;;letter-spacing:-0.078px;">Поделение:</span>
<span class="t" style="left:105.80px;top:282px;font-size:12px;;letter-spacing:-0.027px;">Производство</span>
<span class="t" style="left:18.20px;top:307px;font-size:12px;;transform:scaleX(0.9518);transform-origin:1px 0;">Съставил:</span>
<span class="t" style="left:105.80px;top:310px;font-size:12px;;letter-spacing:0.058px;">Стоян Николов</span>
<span class="t" style="left:414.00px;top:223px;font-size:12px;;letter-spacing:0.100px;">Контрагент:</span>
<span class="t" style="left:414.00px;top:251px;font-size:12px;;letter-spacing:0.500px;">МОЛ:</span>
<span class="t" style="left:414.00px;top:279px;font-size:12px;;letter-spacing:0.056px;">Поделение:</span>
<span class="t" style="left:502.30px;top:226px;font-size:12px;;letter-spacing:-0.092px;">Потребител на продукта ООД</span>
<span class="t" style="left:953.00px;top:229px;font-size:12px;font-weight:bold;letter-spacing:1.000px;">...</span>
<span class="t" style="left:502.30px;top:254px;font-size:12px;;letter-spacing:-0.180px;">Зоя Иванова</span>
<span class="t" style="left:502.30px;top:282px;font-size:12px;;letter-spacing:-0.118px;">Производство</span>
<span class="t" style="left:21.50px;top:350px;font-size:12px;;letter-spacing:-0.300px;">Бърз филтър</span>
<span class="t" style="left:104.50px;top:350px;font-size:12px;;letter-spacing:0.071px;">Продукт:</span>
<span class="t" style="left:228.00px;top:350px;font-size:12px;;letter-spacing:0.500px;">Дим.</span>
<span class="t" style="left:369.00px;top:350px;font-size:12px;;transform:scaleX(0.9444);transform-origin:1px 0;">Склад:</span>
<span class="t" style="left:412.30px;top:350px;font-size:12px;;letter-spacing:-0.214px;width:48.3px;overflow:hidden;">Склад Пр</span>
<span class="t" style="left:27.00px;top:377px;font-size:12px;;letter-spacing:0.750px;">No.</span>
<span class="t" style="left:50.50px;top:377px;font-size:12px;;letter-spacing:0.077px;">Код продукт...</span>
<span class="t" style="left:133.50px;top:377px;font-size:12px;;letter-spacing:0.133px;">Продукт/материал</span>
<span class="t" style="left:391.70px;top:377px;font-size:12px;;transform:scaleX(0.9489);transform-origin:1px 0;">Партида</span>
<span class="t" style="left:489.00px;top:377px;font-size:12px;;letter-spacing:-0.088px;">Дата на годност...</span>
<span class="t" style="left:588.50px;top:377px;font-size:12px;;letter-spacing:0.111px;">Количество</span>
<span class="t" style="left:657.50px;top:377px;font-size:12px;;letter-spacing:0.250px;">Мярка</span>
<span class="t" style="left:707.50px;top:377px;font-size:12px;;transform:scaleX(0.9643);transform-origin:1px 0;">Цена</span>
<span class="t" style="left:774.50px;top:377px;font-size:12px;;transform:scaleX(0.9359);transform-origin:1px 0;">Валута</span>
<span class="t" style="left:824.50px;top:377px;font-size:12px;;letter-spacing:0.444px;">Налично...</span>
<span class="t" style="left:891.00px;top:377px;font-size:12px;;letter-spacing:-0.136px;">Запазени ...</span>
<span class="t" style="left:958.00px;top:377px;font-size:12px;;letter-spacing:0.000px;width:22px;overflow:hidden;">Стел</span>
<span class="t" style="left:40.00px;top:426px;font-size:12px;;letter-spacing:0.000px;">1</span>
<span class="t" style="left:50.50px;top:426px;font-size:12px;;transform:scaleX(0.9105);transform-origin:1px 0;">590</span>
<span class="t" style="left:133.50px;top:426px;font-size:12px;;letter-spacing:0.025px;">ПФ Супер микс (суров)</span>
<span class="t" style="left:391.70px;top:426px;font-size:12px;;transform:scaleX(0.9069);transform-origin:1px 0;">L20251103</span>
<span class="t" style="left:488.00px;top:426px;font-size:12px;;transform:scaleX(0.9362);transform-origin:1px 0;">25.11.2026</span>
<span class="t" style="left:638.50px;top:426px;font-size:12px;;transform:scaleX(0.9000);transform-origin:1px 0;">8.0</span>
<span class="t" style="left:658.00px;top:426px;font-size:12px;;letter-spacing:1.500px;">кг</span>
<span class="t" style="left:749.00px;top:426px;font-size:12px;;transform:scaleX(0.8696);transform-origin:0px 0;">0.00</span>
<span class="t" style="left:774.50px;top:426px;font-size:12px;;transform:scaleX(0.8542);transform-origin:1px 0;">EUR</span>
<span class="t" style="left:866.50px;top:426px;font-size:12px;;transform:scaleX(0.8409);transform-origin:1px 0;">16.0</span>
<span class="t" style="left:11.30px;top:602px;font-size:12px;;letter-spacing:0.140px;">Запис:</span>
<span class="t" style="left:141.80px;top:602px;font-size:12px;;letter-spacing:-0.167px;">от 1</span>
<span class="t" style="left:128.00px;top:602px;font-size:12px;;letter-spacing:0.000px;">1</span>
<span class="t" style="left:9.00px;top:622px;font-size:12px;;letter-spacing:-0.217px;">1 запис</span>
<span class="t" style="left:857.00px;top:622px;font-size:12px;;letter-spacing:-0.062px;">Стойност:</span>
<span class="t" style="left:955.50px;top:623px;font-size:13px;font-weight:bold;transform:scaleX(0.9583);transform-origin:1px 0;">0.00</span>
</body></html>
